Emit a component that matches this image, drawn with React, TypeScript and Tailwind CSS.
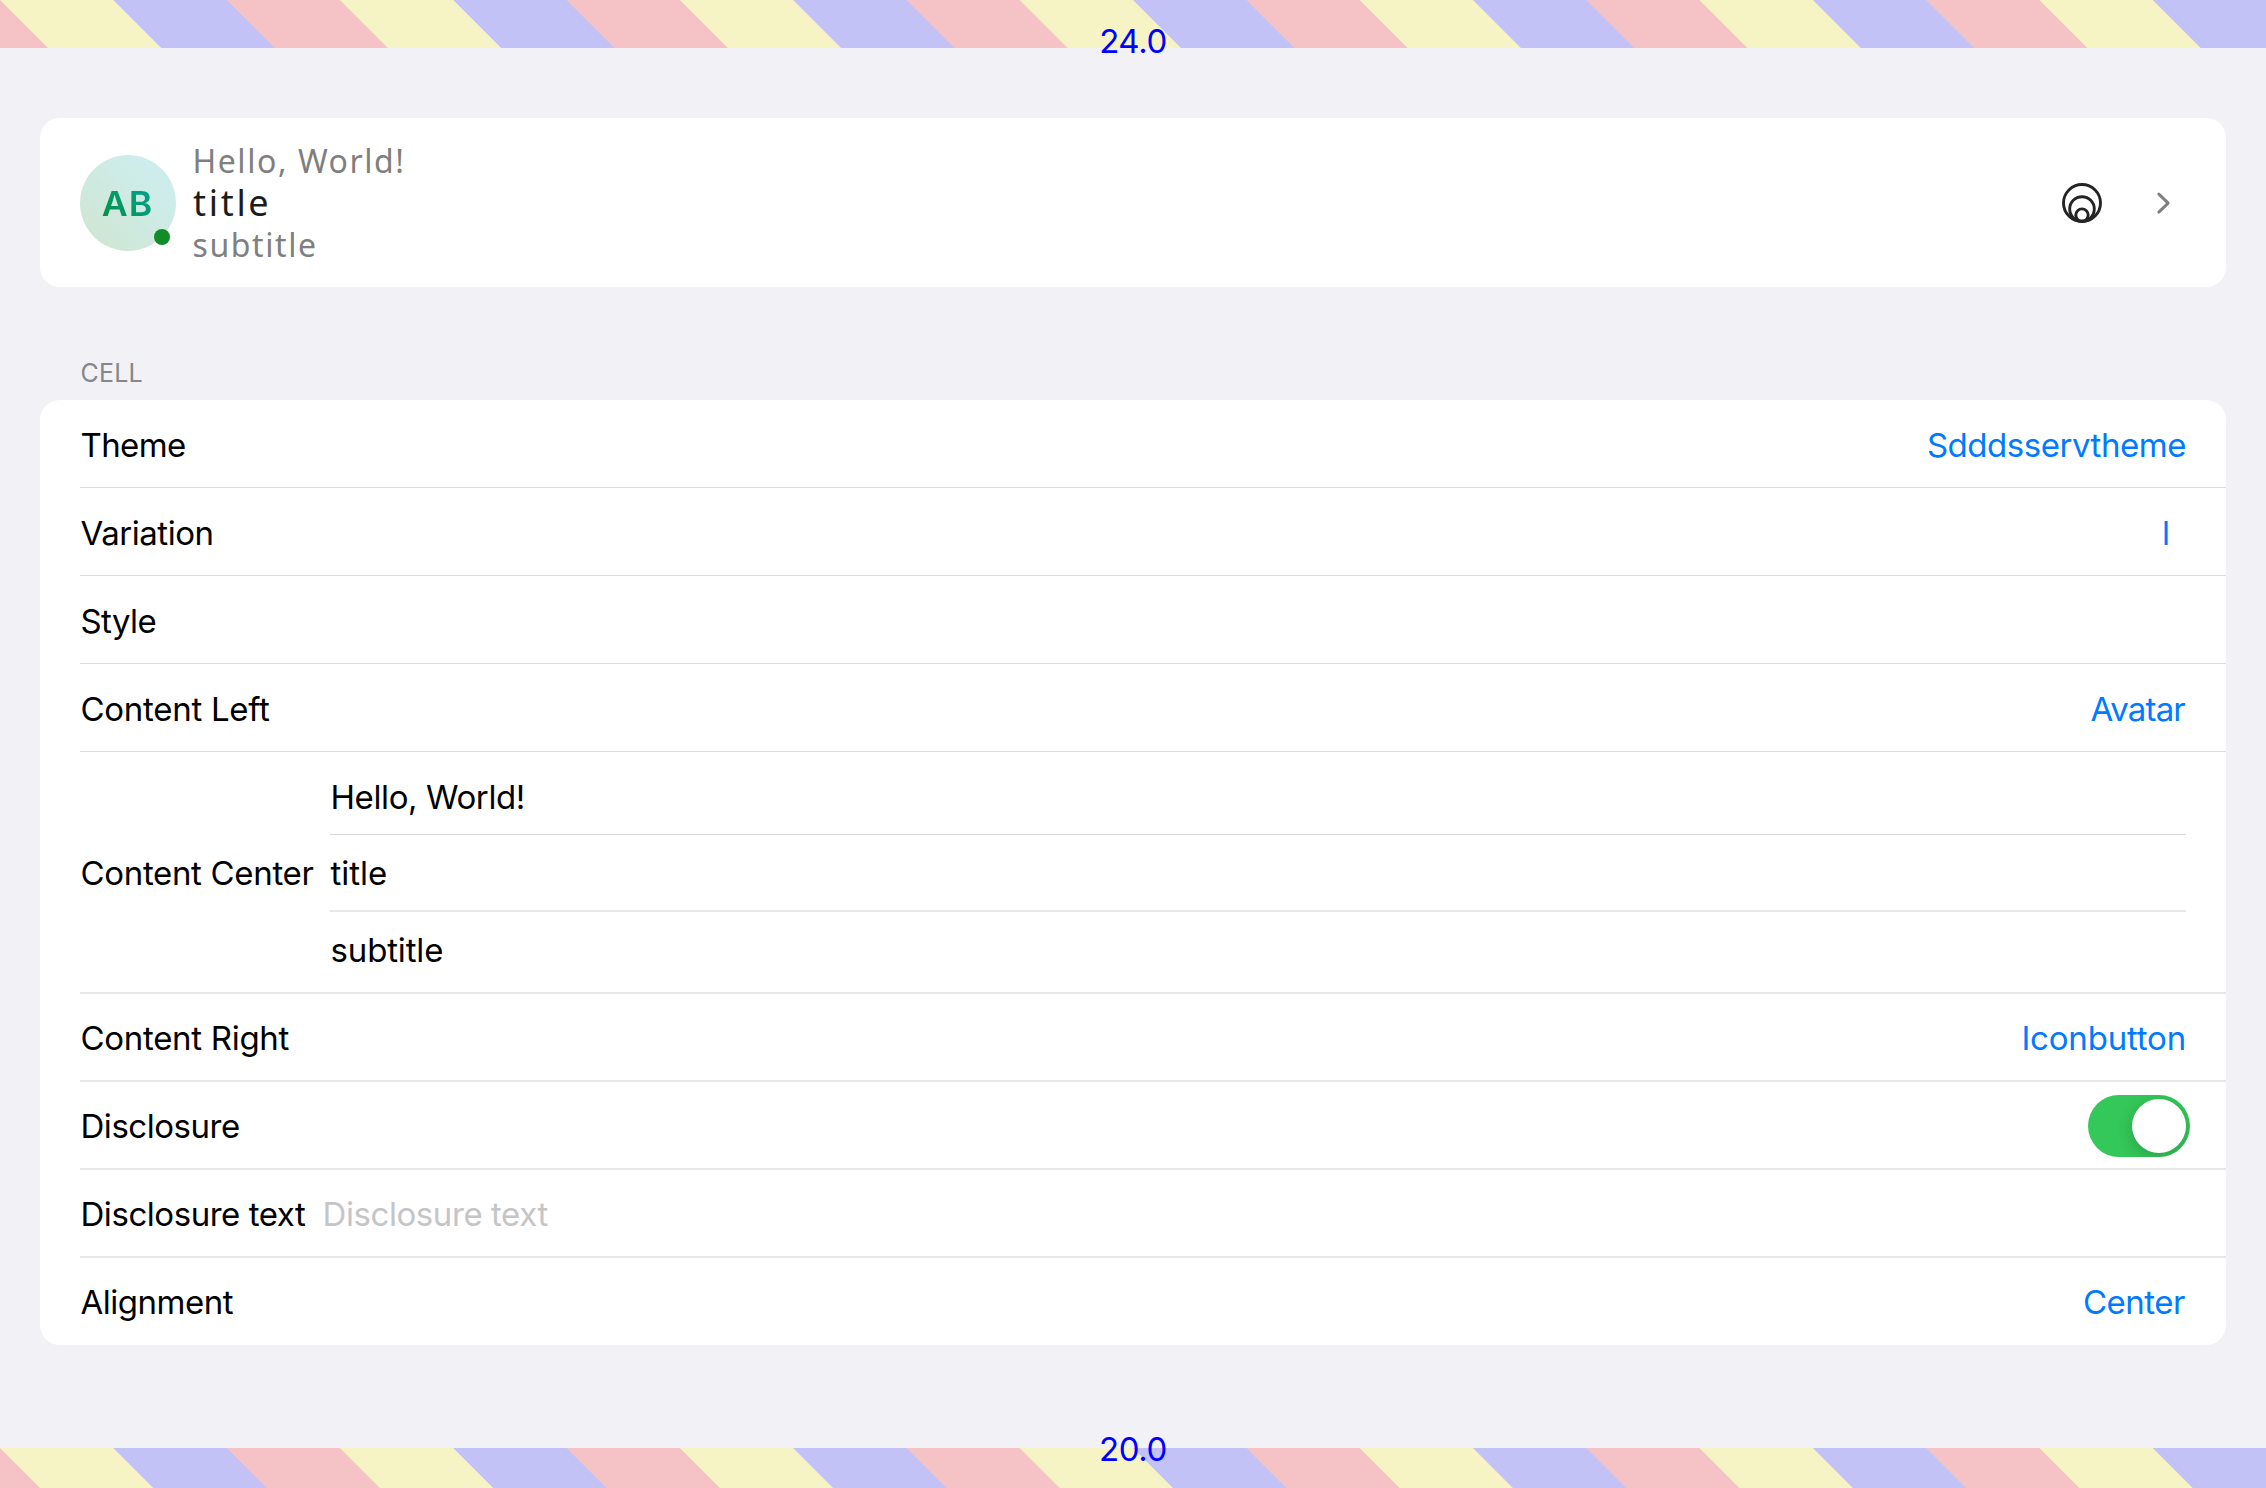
import type { ReactNode } from "react";

const STRIPE_STEP = 113.3;
const STRIPE_COLORS = ["#f5c2c5", "#f6f4c5", "#c2c2f7"];

function StripeBand({ height }: { height: number }) {
  return (
    <svg width="2266" height={height} viewBox={`0 0 2266 ${height}`} className="block">
      <rect width="2266" height={height} fill={STRIPE_COLORS[0]} />
      {Array.from({ length: 20 }, (_, i) => {
        const x = i * STRIPE_STEP;
        return (
          <polygon
            key={i}
            points={`${x},0 2400,0 2400,${height} ${x + height},${height}`}
            fill={STRIPE_COLORS[(i + 1) % 3]}
          />
        );
      })}
    </svg>
  );
}

function Row({
  label,
  tracking,
  divider,
  children,
}: {
  label: string;
  tracking: string;
  divider: string;
  children?: ReactNode;
}) {
  return (
    <div className={`ml-10 flex items-center justify-between pr-10 ${divider}`}>
      <span className={`pl-[0.5px] ${tracking}`}>{label}</span>
      {children}
    </div>
  );
}

const THIN = "h-[88px] border-b border-[#d9d9db] pt-[2px]";
const SOFT = "h-[88px] border-b-2 border-[#e8e8e9] pt-px";

export default function App() {
  return (
    <div className="flex h-[1488px] w-[2266px] flex-col overflow-hidden bg-[#f2f1f6] font-['Inter',sans-serif] text-[33px] leading-[40px] text-black">
      <header className="relative h-12">
        <StripeBand height={48} />
        <div className="absolute inset-x-0 top-[21px] text-center tracking-[-0.4px] text-[#0000ff]">24.0</div>
      </header>

      <main className="flex-1 px-10 pt-[70px]">
        <section className="flex h-[169px] items-center rounded-[20px] bg-white px-10">
          <div className="relative flex size-24 items-center justify-center rounded-full bg-linear-[45deg] from-[#cfe5d0] to-[#cdeff3]">
            <span className="inline-block scale-x-[1.05] bg-linear-[45deg] from-[#069040] to-[#00a396] bg-clip-text pt-[2px] text-[34px] font-semibold tracking-[1px] text-transparent">
              AB
            </span>
            <span className="absolute right-[6px] bottom-[6px] size-4 rounded-full bg-[#118c26]" />
          </div>
          <div className="ml-4 flex flex-col font-['Noto_Sans',sans-serif] text-[32px] text-[#7f7f7f]">
            <span className="pl-[0.5px] leading-[39px] tracking-[1.55px]">Hello, World!</span>
            <span className="pl-px text-[36px] leading-[45px] tracking-[2.7px] text-[#1c1c1c]">title</span>
            <span className="pl-[0.5px] leading-[40px] tracking-[1.6px]">subtitle</span>
          </div>
          <div className="ml-auto flex items-center">
            <svg width="48" height="48" viewBox="0 0 48 48" fill="none" stroke="#242424" strokeWidth="2.9">
              <circle cx="24" cy="24" r="18.5" />
              <circle cx="24" cy="30" r="12.3" />
              <circle cx="24" cy="36.1" r="6.2" />
            </svg>
            <svg
              width="32"
              height="32"
              viewBox="0 0 32 32"
              fill="none"
              stroke="#7f7f7f"
              strokeWidth="2.9"
              strokeLinecap="round"
              strokeLinejoin="round"
              className="mr-[6px] ml-[42px]"
            >
              <path d="M10.8 7.1L20.2 16.1L10.8 25.1" />
            </svg>
          </div>
        </section>

        <h2 className="mt-[70px] h-[43px] pl-[40.5px] text-[25px] leading-[32px] tracking-[0.2px] text-[#86868b]">
          CELL
        </h2>

        <section className="h-[945px] overflow-hidden rounded-[20px] bg-white">
          <Row label="Theme" tracking="tracking-[-0.6px]" divider={THIN}>
            <span className="tracking-[-0.46px] text-[#007aff]">Sdddsservtheme</span>
          </Row>
          <Row label="Variation" tracking="tracking-[-0.45px]" divider={THIN}>
            <span className="mr-4 text-[#007aff]">l</span>
          </Row>
          <Row label="Style" tracking="tracking-[-0.58px]" divider={THIN} />
          <Row label="Content Left" tracking="tracking-[-0.28px]" divider={THIN}>
            <span className="mr-px tracking-[-0.8px] text-[#007aff]">Avatar</span>
          </Row>

          <div className="ml-10 flex h-[242px] items-center border-b-2 border-[#e8e8e9] pr-10">
            <span className="w-[250px] pt-[2px] pl-[0.5px] tracking-[-0.33px]">Content Center</span>
            <div className="flex h-full flex-1 flex-col">
              <div className="flex h-[83px] items-center border-b border-[#d9d9db] pt-[7px] pl-[0.5px] tracking-[-0.4px]">
                Hello, World!
              </div>
              <div className="flex h-[77px] items-center border-b-2 border-[#e8e8e9] pt-px pl-[0.5px] tracking-[-0.05px]">
                title
              </div>
              <div className="flex flex-1 items-center pb-[5px] pl-[0.5px] tracking-[-0.15px]">subtitle</div>
            </div>
          </div>

          <Row label="Content Right" tracking="tracking-[-0.3px]" divider={SOFT}>
            <span className="tracking-[-0.19px] text-[#007aff]">Iconbutton</span>
          </Row>
          <Row label="Disclosure" tracking="tracking-[-0.46px]" divider={SOFT}>
            <span className="-mr-1 flex h-[62px] w-[102px] items-center justify-end overflow-hidden rounded-full bg-[#34c759] pr-1">
              <span className="size-[54px] rounded-full bg-white shadow-[0_4px_16px_rgba(0,0,0,0.2)]" />
            </span>
          </Row>
          <div className={`ml-10 flex items-center pr-10 ${SOFT}`}>
            <span className="w-[242.5px] pl-[0.5px] tracking-[-0.45px]">Disclosure text</span>
            <span className="tracking-[-0.42px] text-[#c5c5c7]">Disclosure text</span>
          </div>
          <Row label="Alignment" tracking="tracking-[-0.5px]" divider="h-[87px]">
            <span className="mr-px tracking-[-0.5px] text-[#007aff]">Center</span>
          </Row>
        </section>
      </main>

      <footer className="relative h-10">
        <StripeBand height={40} />
        <div className="absolute inset-x-0 top-[-19px] text-center tracking-[-0.45px] text-[#0000ff]">20.0</div>
      </footer>
    </div>
  );
}
